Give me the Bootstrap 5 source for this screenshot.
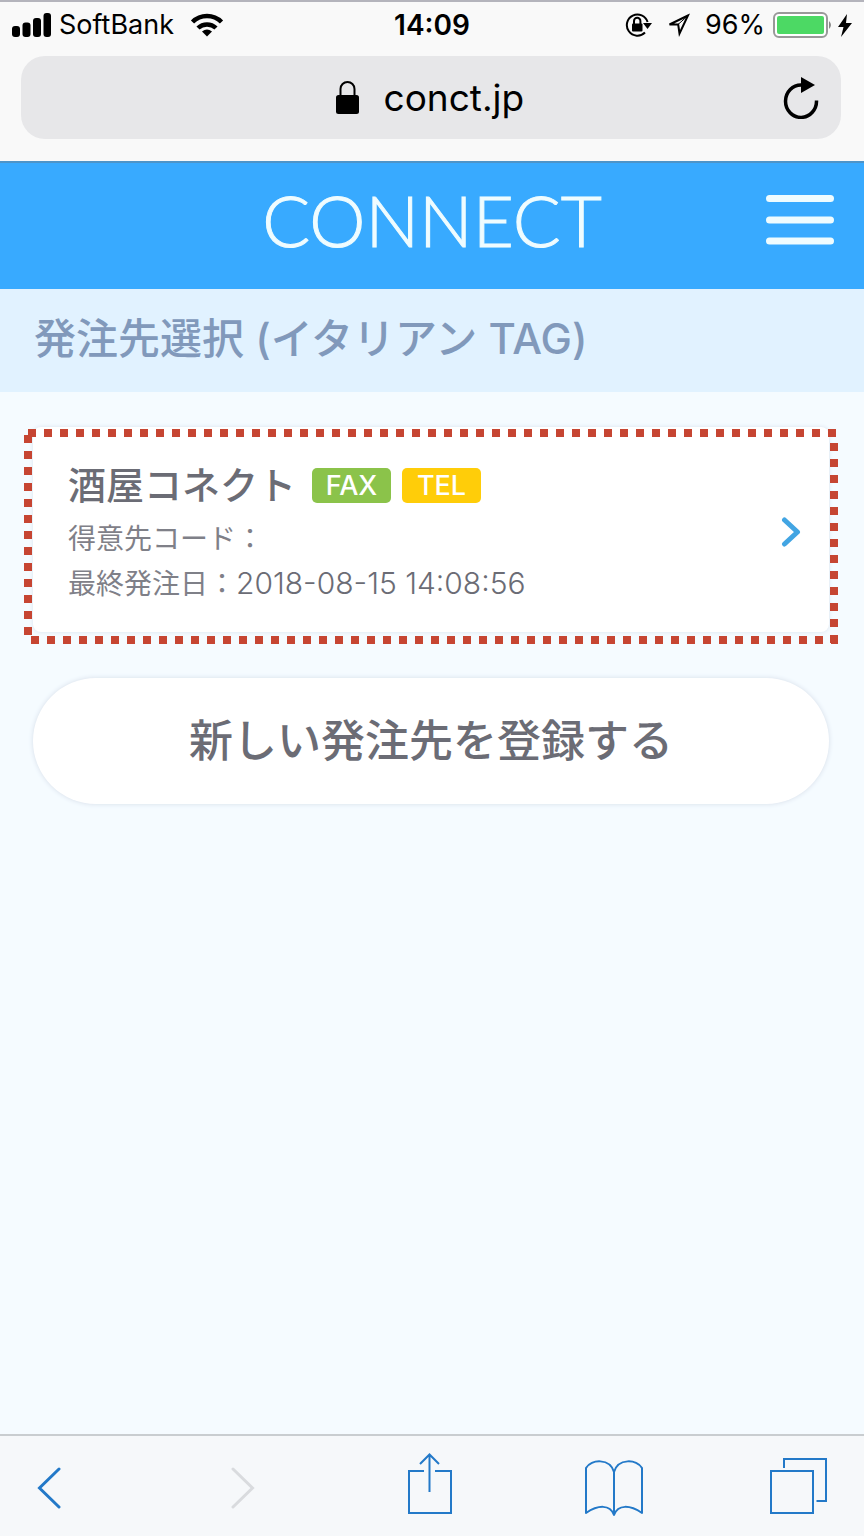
<!DOCTYPE html>
<html lang="ja">
<head>
<meta charset="utf-8">
<meta name="viewport" content="width=device-width, initial-scale=1">
<title>CONNECT - 発注先選択</title>
<link href="https://cdn.jsdelivr.net/npm/bootstrap@5.3.0/dist/css/bootstrap.min.css" rel="stylesheet">
<style>
  body { font-family: Inter, "Noto Sans CJK JP", sans-serif; background: #f5fbff; color: #6b6c75; }
  svg { display: block; flex: none; }
  button:not(.register) { border: 0; background: none; padding: 0; color: inherit; }

  .browser-top { background: #f9f9f9; color: #000; border-top: 2px solid #b4b4bc; border-bottom: 2px solid #4d94c9; }
  .status-bar { height: 54px; padding: 0 12px; font-size: 28px; line-height: 46px; }
  .status-side { flex: 1 1 0; height: 46px; font-size: 27px; }
  .status-icons { gap: 15px; }
  .address-bar { height: 83px; margin: 0 23px 22px 21px; padding: 0 22px; border-radius: 24px; background: #e7e7e9; }
  .address-bar input { width: 144px; border: 0; padding: 0; background: none; color: #000; font-size: 37px; line-height: 48px; }

  .site-header { background: #38aaff; height: 126px; padding: 0 30px 12px; }
  .brand-name { font-family: Lato, sans-serif; font-weight: 300; font-size: 71px; line-height: 80px; color: #effcff; -webkit-text-stroke: 1px #effcff; text-decoration: none; }
  .page-title { background: #e1f2ff; color: #8199bb; padding: 20px 34px 23px; font-size: 42px; line-height: 60px; font-weight: 500; margin: 0; }

  .content { padding: 35px 35px 0 33px; }
  .supplier { background: #fff; border-radius: 8px; box-shadow: 0 0 4px #d9e2ee; padding: 36px 28px 26px 35px; color: inherit; text-decoration: none; margin-bottom: 46px; }
  .supplier h2 { font-size: 38px; line-height: 44px; font-weight: 500; margin: 0 5px 0 0; }
  .supplier p { font-size: 28px; line-height: 44px; margin: 0; color: #7f8088; }
  .supplier time { font-size: 30px; font-weight: 300; color: #6b6c75; }
  .supplier .details { padding-top: 10px; }
  .supplier-name { gap: 11px; }
  .channel { width: 79px; height: 35px; border-radius: 5px; padding: 0; font-size: 27px; line-height: 35px; font-weight: 500; }
  .channel-fax { background: #8bc34a; }
  .channel-tel { background: #ffcd09; }

  /* square-dotted frame laid over the highlighted supplier */
  .frame { inset: 2px -9px -12px; pointer-events: none;
    --h: repeating-linear-gradient(90deg, #c64532 0 8px, transparent 8px 16px);
    --v: repeating-linear-gradient(180deg, #c64532 0 8px, transparent 8px 16px);
    background: var(--h) 4px 0 / 100% 8px no-repeat, var(--h) 7px 100% / 100% 8px no-repeat,
      var(--v) 0 6px / 8px 200px no-repeat, var(--v) 100% 14px / 8px 200px no-repeat; }

  .register { height: 126px; border: 0; border-radius: 63px; background: #fff; box-shadow: 0 0 5px #d5dde8; color: #6b6c75; font-size: 44px; font-weight: 500; line-height: 66px; }
  .register:hover { background: #fff; color: #6b6c75; }

  .toolbar { height: 102px; border-top: 2px solid #c9cdd0; background: #f6f8fa; color: #2379c8; padding: 4px 34px 0 10px; }
  .toolbar button { width: 64px; height: 72px; display: flex; align-items: center; justify-content: center; }
  .toolbar .go-back { width: 78px; }
  .toolbar .go-forward { width: 70px; color: #d9dbde; }
</style>
</head>
<body class="d-flex flex-column min-vh-100">

<div class="browser-top">
  <div class="status-bar d-flex align-items-start">
    <div class="status-side d-flex align-items-center">
      <svg width="39" height="24" viewBox="0 0 39 24"><rect y="13" width="8" height="11" rx="3"/><rect x="10.500" y="9.500" width="8" height="14.500" rx="3"/><rect x="21" y="5" width="8" height="19" rx="3"/><rect x="31.500" width="7.500" height="24" rx="3"/></svg>
      <span class="ms-2 me-3">SoftBank</span>
      <svg width="34" height="24" viewBox="0 0 32 24" fill="none" stroke="#000" stroke-width="4.500"><path d="M1.500 9a20.500 20.500 0 0 1 29 0M7 15a13 13 0 0 1 18 0"/><path d="M16 23.500l-5-5q5-4 10 0z" fill="#000" stroke="none"/></svg>
    </div>
    <span class="fw-semibold">14:09</span>
    <div class="status-side d-flex align-items-center justify-content-end">
      <div class="status-icons d-flex align-items-center">
        <svg width="27" height="26" viewBox="0 0 27 26" fill="none" stroke="#000" stroke-width="2"><path d="M22.600 10A10.600 10.600 0 1 0 20 20.500"/><path d="M18 11h9l-4.500 6z" fill="#000" stroke="none"/><rect x="7" y="11.500" width="10.500" height="8" rx="1" fill="#000" stroke="none"/><path d="M9 12V9a3.200 3.200 0 0 1 6.400 0v3"/></svg>
        <svg width="23" height="24" viewBox="0 0 23 24" fill="none" stroke="#000" stroke-width="2"><path d="M21 2.500L2.500 11.500h8.700L12.500 20.500z"/><path d="M11 11.500l9-8" stroke-width="1"/></svg>
        <span>96%</span>
      </div>
      <svg class="ms-2" width="61" height="26" viewBox="2 0 61 26"><rect x="3" y="1" width="53" height="24" rx="5" fill="#fff" stroke="#999" stroke-width="2"/><rect x="6" y="4" width="47" height="18" rx="2" fill="#4cd964"/><path d="M58 9q4 4 0 8z" fill="#888"/></svg>
      <svg class="ms-1" width="14" height="23" viewBox="0 0 14 23"><path d="M9 0L0 13h5.500L3 23l11-14H8z"/></svg>
    </div>
  </div>
  <form class="address-bar d-flex align-items-center">
    <span class="flex-fill w-25"></span>
    <svg width="25" height="33" viewBox="0 0 25 33"><rect x="1" y="14" width="23" height="19" rx="2.500"/><path d="M5.500 15V8a7 7 0 0 1 14 0v7" fill="none" stroke="#000" stroke-width="2"/></svg>
    <input class="ms-4" type="text" value="conct.jp" aria-label="アドレス">
    <span class="flex-fill w-25 d-flex justify-content-end">
      <button type="button" aria-label="再読み込み"><svg width="36" height="42" viewBox="0 0 36 42" fill="none" stroke="#000" stroke-width="3.500"><path d="M18.500 8A15.500 16.200 0 1 0 33.500 23.500"/><path d="M18 0l14 8L18 16z" fill="#000" stroke="none"/></svg></button>
    </span>
  </form>
</div>

<header class="site-header d-flex align-items-center justify-content-between">
  <span class="flex-fill w-25"></span>
  <a class="brand-name" href="#">CONNECT</a>
  <span class="flex-fill w-25 d-flex justify-content-end">
    <button type="button" aria-label="メニュー"><svg width="68" height="58" viewBox="0 0 68 58" stroke="#effcff" stroke-width="7" stroke-linecap="round"><path d="M3.500 7.500h61M3.500 29h61M3.500 50h61"/></svg></button>
  </span>
</header>

<h1 class="page-title">発注先選択 (イタリアン TAG)</h1>

<main class="content flex-grow-1">
  <a class="supplier d-flex align-items-center justify-content-between position-relative" href="#">
    <div>
      <div class="supplier-name d-flex align-items-center">
        <h2>酒屋コネクト</h2>
        <span class="badge channel channel-fax">FAX</span>
        <span class="badge channel channel-tel">TEL</span>
      </div>
      <div class="details">
        <p>得意先コード：</p>
        <p>最終発注日：<time datetime="2018-08-15T14:08:56">2018-08-15 14:08:56</time></p>
      </div>
    </div>
    <svg width="20" height="36" viewBox="0 0 20 36" fill="none" stroke="#42a5e3" stroke-width="5" stroke-linecap="round" stroke-linejoin="round"><path d="M3.500 3l13 12-13 12"/></svg>
    <span class="frame position-absolute"></span>
  </a>
  <button type="button" class="register btn w-100">新しい発注先を登録する</button>
</main>

<nav class="toolbar d-flex justify-content-between align-items-center" aria-label="ブラウザ">
  <button class="go-back" type="button" aria-label="戻る"><svg width="24" height="42" viewBox="0 0 24 42" fill="none" stroke="currentColor" stroke-width="3" stroke-linecap="round"><path d="M22 2L2.500 21 22 40"/></svg></button>
  <button class="go-forward" type="button" aria-label="進む" disabled><svg width="24" height="42" viewBox="0 0 24 42" fill="none" stroke="currentColor" stroke-width="3" stroke-linecap="round"><path d="M2 2l19.500 19L2 40"/></svg></button>
  <button type="button" aria-label="共有"><svg width="46" height="72" viewBox="0 4 46 72" fill="none" stroke="currentColor" stroke-width="2"><path d="M17 23H2v42h42V23H28M22.500 44V7M13 16l9.500-9.500L32 16"/></svg></button>
  <button type="button" aria-label="ブックマーク"><svg width="60" height="72" viewBox="0 4 60 72" fill="none" stroke="currentColor" stroke-width="2" stroke-linejoin="round"><path d="M30 66V24C26 10 7 11 2 20v45c12-8 24-9 28 2 4-11 16-10 28-2V20C53 11 34 10 30 24"/></svg></button>
  <button type="button" aria-label="タブ"><svg width="58" height="72" viewBox="0 4 58 72" fill="none" stroke="currentColor" stroke-width="2"><path d="M2 23h42v42H2zM15 20v-9h42v42h-9.500"/></svg></button>
</nav>

<script src="https://cdn.jsdelivr.net/npm/bootstrap@5.3.0/dist/js/bootstrap.bundle.min.js"></script>
</body>
</html>
